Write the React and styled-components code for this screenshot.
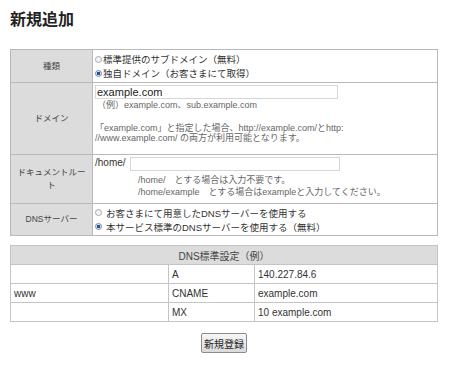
import React from "react";
import styled, { createGlobalStyle } from "styled-components";

const GlobalStyle = createGlobalStyle`
  html, body {
    margin: 0;
    padding: 0;
    background: #ffffff;
  }
  body {
    font-family: "Liberation Sans", "Noto Sans CJK JP", sans-serif;
    color: #333333;
  }
`;

const fontStack = `"Liberation Sans", "Noto Sans CJK JP", sans-serif`;

export default function App() {
    return (
        <StyledPage>
            <GlobalStyle />
            <StyledTitle>新規追加</StyledTitle>

            <StyledFormTable>
                <colgroup>
                    <col style={{ width: 82 }} />
                    <col />
                </colgroup>
                <tbody>
                    <tr>
                        <StyledLabel style={{ height: 33 }}>種類</StyledLabel>
                        <StyledField>
                            <StyledChoice>
                                <StyledRadio type="radio" name="kind" />
                                標準提供のサブドメイン（無料）
                            </StyledChoice>
                            <StyledChoice>
                                <StyledRadio type="radio" name="kind" defaultChecked />
                                独自ドメイン（お客さまにて取得）
                            </StyledChoice>
                        </StyledField>
                    </tr>
                    <tr>
                        <StyledLabel style={{ height: 72 }}>ドメイン</StyledLabel>
                        <StyledField $top>
                            <StyledInput $width={243} defaultValue="example.com" />
                            <StyledHint $indent={2}>（例）example.com、sub.example.com</StyledHint>
                            <StyledHint $indent={2}>&nbsp;</StyledHint>
                            <StyledHint $tight>
                                「example.com」と指定した場合、http://example.com/とhttp:
                                <br />
                                //www.example.com/ の両方が利用可能となります。
                            </StyledHint>
                        </StyledField>
                    </tr>
                    <tr>
                        <StyledLabel style={{ height: 49 }}>
                            ドキュメントルー
                            <br />ト
                        </StyledLabel>
                        <StyledField $top>
                            <StyledPathRow>
                                /home/
                                <StyledInput $width={210} />
                            </StyledPathRow>
                            <StyledHint $indent={43}>/home/　とする場合は入力不要です。</StyledHint>
                            <StyledHint $indent={43}>
                                /home/example　とする場合はexampleと入力してください。
                            </StyledHint>
                        </StyledField>
                    </tr>
                    <tr>
                        <StyledLabel style={{ height: 32 }}>DNSサーバー</StyledLabel>
                        <StyledField>
                            <StyledChoice $gap>
                                <StyledRadio type="radio" name="dns" />
                                お客さまにて用意したDNSサーバーを使用する
                            </StyledChoice>
                            <StyledChoice $gap>
                                <StyledRadio type="radio" name="dns" defaultChecked />
                                本サービス標準のDNSサーバーを使用する（無料）
                            </StyledChoice>
                        </StyledField>
                    </tr>
                </tbody>
            </StyledFormTable>

            <StyledDnsTable>
                <colgroup>
                    <col style={{ width: 158 }} />
                    <col style={{ width: 86 }} />
                    <col />
                </colgroup>
                <thead>
                    <tr>
                        <StyledDnsHead colSpan={3}>DNS標準設定（例）</StyledDnsHead>
                    </tr>
                </thead>
                <tbody>
                    <tr>
                        <StyledDnsCell></StyledDnsCell>
                        <StyledDnsCell>A</StyledDnsCell>
                        <StyledDnsCell>140.227.84.6</StyledDnsCell>
                    </tr>
                    <tr>
                        <StyledDnsCell>www</StyledDnsCell>
                        <StyledDnsCell>CNAME</StyledDnsCell>
                        <StyledDnsCell>example.com</StyledDnsCell>
                    </tr>
                    <tr>
                        <StyledDnsCell></StyledDnsCell>
                        <StyledDnsCell>MX</StyledDnsCell>
                        <StyledDnsCell>10 example.com</StyledDnsCell>
                    </tr>
                </tbody>
            </StyledDnsTable>

            <StyledActions>
                <StyledButton type="button">新規登録</StyledButton>
            </StyledActions>
        </StyledPage>
    );
}

const StyledPage = styled.div`
  width: 468px;
  height: 373px;
  box-sizing: border-box;
  padding: 10px 10px 0 10px;
  font-family: ${fontStack};
`;

const StyledTitle = styled.h1`
  margin: 0;
  font-size: 16px;
  line-height: 20px;
  font-weight: bold;
  color: #222222;
`;

const StyledFormTable = styled.table`
  margin-top: 19px;
  width: 428px;
  table-layout: fixed;
  border-collapse: collapse;
  border: 1px solid #b9b9b9;
  font-size: 10px;
`;

const StyledLabel = styled.th`
  padding: 0;
  background: #dcdcdc;
  border: 1px solid #b9b9b9;
  font-weight: normal;
  font-size: 8.5px;
  line-height: 13px;
  color: #444444;
  text-align: center;
  vertical-align: middle;
  white-space: nowrap;
  box-sizing: border-box;
`;

const StyledField = styled.td`
  padding: ${(p) => (p.$top ? "2px 2px 2px 2px" : "0 2px")};
  border: 1px solid #b9b9b9;
  vertical-align: ${(p) => (p.$top ? "top" : "middle")};
  color: #333333;
`;

const StyledChoice = styled.label`
  display: flex;
  align-items: center;
  gap: ${(p) => (p.$gap ? "4px" : "1px")};
  height: 14px;
  font-size: 9.5px;
  white-space: nowrap;
`;

const StyledRadio = styled.input`
  appearance: none;
  margin: 0;
  width: 7px;
  height: 7px;
  border-radius: 50%;
  border: 1px solid #a8a8a8;
  background: #f4f4f4;
  flex: none;
  &:checked {
    border-color: #6f8fb8;
    background: radial-gradient(circle, #2b4f86 0 1.6px, #d9e4f2 2px);
  }
`;

const StyledInput = styled.input`
  width: ${(p) => p.$width}px;
  height: 14px;
  box-sizing: border-box;
  margin: 0;
  padding: 0 1px;
  border: 1px solid #d6d6d6;
  font-family: ${fontStack};
  font-size: 11px;
  color: #222222;
  background: #ffffff;
  outline: none;
`;

const StyledHint = styled.div`
  padding-left: ${(p) => p.$indent || 0}px;
  font-size: 9px;
  line-height: ${(p) => (p.$tight ? "10px" : "12px")};
  color: #666666;
  white-space: nowrap;
`;

const StyledPathRow = styled.div`
  display: flex;
  align-items: flex-start;
  gap: 4px;
  font-size: 10px;
  line-height: 12px;
  color: #333333;
  margin-bottom: 3px;
`;

const StyledDnsTable = styled.table`
  margin-top: 9px;
  width: 428px;
  table-layout: fixed;
  border-collapse: collapse;
  border: 1px solid #c4c4c4;
  font-size: 10px;
`;

const StyledDnsHead = styled.th`
  height: 18px;
  padding: 0;
  background: #dcdcdc;
  border: 1px solid #c4c4c4;
  font-weight: normal;
  color: #444444;
  text-align: center;
`;

const StyledDnsCell = styled.td`
  height: 18px;
  padding: 0 3px;
  border: 1px solid #c4c4c4;
  color: #333333;
  font-size: 10px;
`;

const StyledActions = styled.div`
  display: flex;
  justify-content: center;
  margin-top: 11px;
  padding-right: 20px;
`;

const StyledButton = styled.button`
  height: 20px;
  padding: 0 2px;
  border: 1px solid #8c8c8c;
  border-radius: 2px;
  background: linear-gradient(#f6f6f6, #dadada);
  font-family: ${fontStack};
  font-size: 10px;
  color: #222222;
  cursor: pointer;
`;
